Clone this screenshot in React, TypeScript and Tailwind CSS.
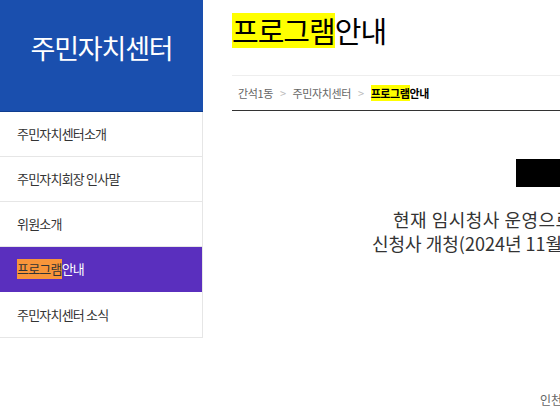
import React from "react";

const font = { fontFamily: '"Noto Sans CJK KR", "Noto Sans", sans-serif' };

const items = [
  "주민자치센터소개",
  "주민자치회장 인사말",
  "위원소개",
  "프로그램안내",
  "주민자치센터 소식",
];

export default function App() {
  return (
    <div
      className="w-[560px] h-[407px] overflow-hidden bg-white flex text-[#333]"
      style={font}
    >
      <aside className="w-[203px] shrink-0">
        <div className="h-[112px] bg-[#1a4fae] border-b border-[#0f3d8f] flex items-center justify-center">
          <span className="text-white text-[27px] tracking-[-1.2px] pb-[14px]">주민자치센터</span>
        </div>
        <ul className="border-r border-b border-[#e6e6e6]">
          {items.map((t, i) =>
            i === 3 ? (
              <li
                key={t}
                className="h-[45px] bg-[#5a2fbe] flex items-center pl-[17px] text-[13px] tracking-[-0.8px] text-white border-b border-[#5a2fbe]"
              >
                <span className="bg-[#f8953a] text-[#333]">프로그램</span>
                <span>안내</span>
              </li>
            ) : (
              <li
                key={t}
                className={`h-[45px] flex items-center pl-[17px] text-[13px] tracking-[-0.8px] text-[#333] ${
                  i < 4 ? "border-b border-[#e6e6e6]" : ""
                }`}
              >
                {t}
              </li>
            )
          )}
        </ul>
      </aside>
      <main className="flex-1 min-w-0 pl-[29px] flex flex-col">
        <h1 className="mt-[13px] h-[35px] flex items-center text-[29px] tracking-[-1px] text-black leading-[35px]">
          <span className="bg-[#ffff00] h-[35px]">프로그램</span>
          <span>안내</span>
        </h1>
        <div className="mt-[27px] w-[600px] border-t border-[#eeeeee] border-b border-b-[#333] h-[36px] flex items-center pl-[6px] text-[11px] tracking-[-0.4px] text-[#666]">
          <span>간석1동</span>
          <span className="mx-[7px] text-[#bbb]">&gt;</span>
          <span>주민자치센터</span>
          <span className="mx-[7px] text-[#bbb]">&gt;</span>
          <span className="font-bold text-black">
            <span className="bg-[#ffff00]">프로그램</span>
            안내
          </span>
        </div>
        <div className="flex flex-col">
          <div className="mt-[48px] ml-[284px] w-[132px] h-[28px] bg-black shrink-0" />
          <div className="mt-[20px] text-[18px] leading-[24px] text-[#333] tracking-[0.5px] whitespace-nowrap">
            <p className="ml-[161px]">현재 임시청사 운영으로 프로그램 운영을 중단합니다.</p>
            <p className="ml-[140px] tracking-[0px]">신청사 개청(2024년 11월 04일) 이후 운영할 예정입니다.</p>
          </div>
        </div>
        <div className="mt-auto ml-[308px] whitespace-nowrap text-[12px] text-[#666] leading-[14px] mb-0">
          인천광역시 남동구 간석1동 행정복지센터
        </div>
      </main>
    </div>
  );
}
